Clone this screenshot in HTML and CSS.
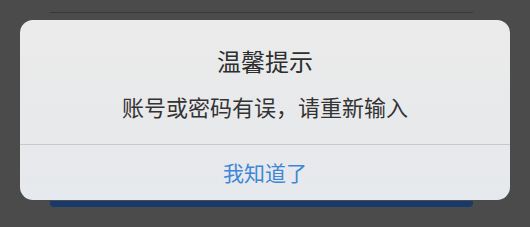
FILE: index.html
```html
<!DOCTYPE html>
<html lang="zh-CN">
<head>
    <meta charset="UTF-8">
    <meta name="viewport" content="width=device-width, initial-scale=1.0">
    <title>温馨提示</title>
    <link rel="stylesheet" href="styles.css">
</head>
<body>
    <div class="screen">
        <div class="page-behind"></div>

        <div class="dialog">
            <div class="dialog-body">
                <h2 class="dialog-title">温馨提示</h2>
                <p class="dialog-msg">账号或密码有误，请重新输入</p>
            </div>
            <button class="dialog-btn">我知道了</button>
        </div>
    </div>
</body>
</html>
```

FILE: styles.css
```css
body {
    margin: 0;
    background-color: #4b4b4b;
    font-family: "Noto Sans CJK SC", "Noto Sans", sans-serif;
}
.screen {
    position: relative;
    width: 530px;
    height: 227px;
    padding-top: 12px;
    box-sizing: border-box;
}
.page-behind {
    margin: 0 57px 0 50px;
    height: 188px;
    border-top: 1px solid #383838;
    border-bottom: 6px solid #173a6a;
    border-radius: 0 0 4px 4px;
}
.dialog {
    position: absolute;
    left: 20px;
    top: 20px;
    width: 490px;
    height: 180px;
    background: linear-gradient(180deg, #ebebeb 0%, #e8e9eb 60%, #e6e9ed 100%);
    border-radius: 13px;
    overflow: hidden;
    display: flex;
    flex-direction: column;
}
.dialog-body {
    padding: 26px 20px 23px;
    text-align: center;
    border-bottom: 1px solid #c8c9cb;
}
.dialog-title {
    margin: 0;
    font-size: 24px;
    font-weight: normal;
    line-height: 30px;
    color: #2e2e2e;
}
.dialog-msg {
    margin: 15px 0 0;
    font-size: 22px;
    line-height: 30px;
    color: #333;
}
.dialog-btn {
    flex: 1;
    border: none;
    background: transparent;
    font-family: inherit;
    font-size: 21px;
    line-height: 55px;
    padding: 0;
    color: #3d87d6;
    cursor: pointer;
}
```
